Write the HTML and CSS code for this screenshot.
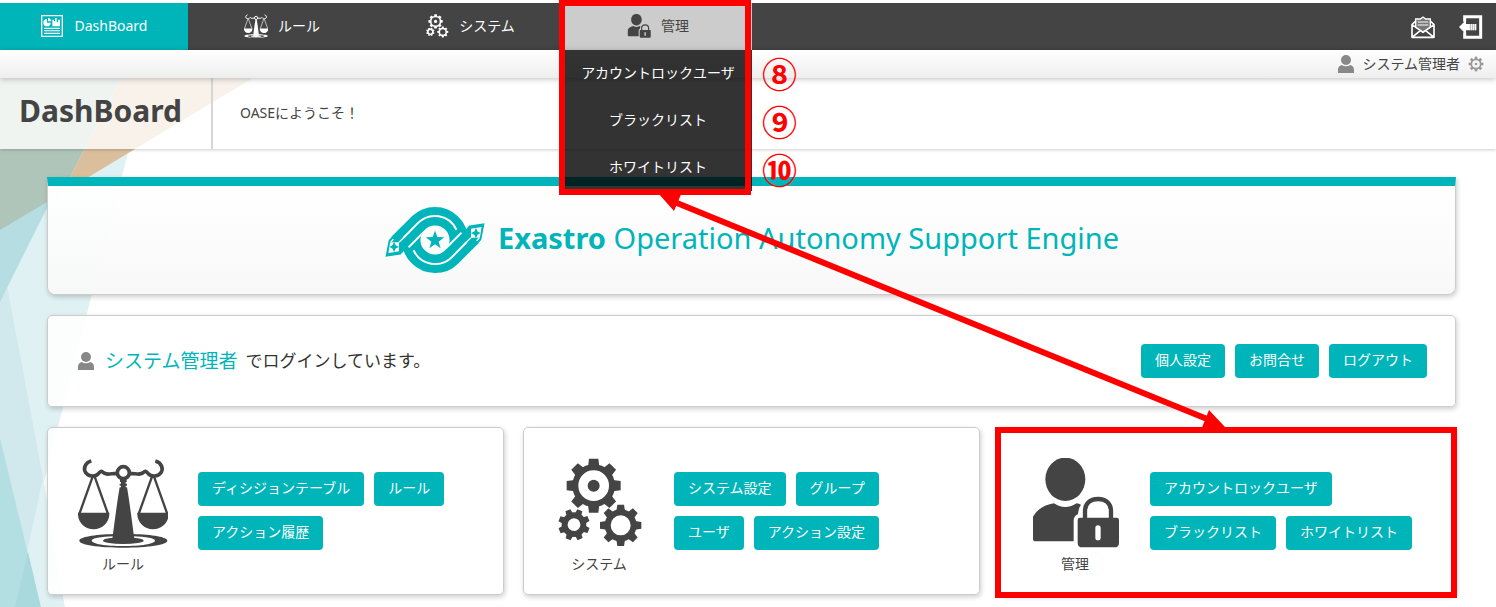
FILE: index.html
```html
<!DOCTYPE html>
<html lang="ja">
<head>
<meta charset="utf-8">
<meta name="viewport" content="width=device-width, initial-scale=1">
<title>DashBoard - Exastro OASE</title>
<link rel="stylesheet" href="styles.css">
</head>
<body>
<svg class="defs" width="0" height="0" aria-hidden="true">
  <symbol id="i-scales" viewBox="54 54 270 270">
    <g fill="none" stroke="currentColor">
      <circle cx="190" cy="98" r="18" stroke-width="11"/>
      <path stroke-width="11" d="M94 63c-20 5-25 25-16 36 8 11 28 12 37 2 6-7 10-9 14-4 8 9 20 4 43 3M286 63c20 5 25 25 16 36-8 11-28 12-37 2-6-7-10-9-14-4-8 9-20 4-43 3"/>
      <path stroke-width="7" d="M98 110 58 222M104 110l40 112M276 110l-40 112M282 110l40 112"/>
    </g>
    <path fill="currentColor" d="M54 218h94c2 28-20 50-47 50s-49-22-47-50zM232 218h94c2 28-20 50-47 50s-49-22-47-50zM180 120h20v6h-3v5h4v6h-4v5h4c8 46 16 110 22 156h-66c6-46 14-110 22-156h4v-5h-4v-6h4v-5h-3z"/>
    <ellipse cx="190" cy="302" rx="61" ry="10" fill="currentColor"/>
    <path fill="currentColor" fill-rule="evenodd" d="M162 282c-60 2-104 9-104 20 0 12 58 21 132 21s132-9 132-21c0-11-44-18-104-20l1 7c40 1 66 6 66 13 0 9-42 16-95 16s-95-7-95-16c0-7 26-12 66-13z"/>
  </symbol>
  <symbol id="i-gears" viewBox="42 54 270 270">
    <g transform="translate(161 137)">
      <circle r="55" fill="none" stroke="currentColor" stroke-width="18"/>
      <circle r="18" fill="currentColor"/>
      <g fill="currentColor">
        <path id="t1" d="M-14-81h28l3 24h-34z"/>
        <use href="#t1" transform="rotate(45)"/><use href="#t1" transform="rotate(90)"/><use href="#t1" transform="rotate(135)"/><use href="#t1" transform="rotate(180)"/><use href="#t1" transform="rotate(225)"/><use href="#t1" transform="rotate(270)"/><use href="#t1" transform="rotate(315)"/>
      </g>
    </g>
    <g transform="translate(242 256)">
      <circle r="39" fill="none" stroke="currentColor" stroke-width="18"/>
      <g fill="currentColor">
        <path id="t2" d="M-10-62h20l3 19h-26z"/>
        <use href="#t2" transform="rotate(45)"/><use href="#t2" transform="rotate(90)"/><use href="#t2" transform="rotate(135)"/><use href="#t2" transform="rotate(180)"/><use href="#t2" transform="rotate(225)"/><use href="#t2" transform="rotate(270)"/><use href="#t2" transform="rotate(315)"/>
      </g>
    </g>
    <g transform="translate(102 254) rotate(22)">
      <circle r="28" fill="none" stroke="currentColor" stroke-width="18"/>
      <g fill="currentColor">
        <path id="t3" d="M-8-47H8l2 15h-20z"/>
        <use href="#t3" transform="rotate(45)"/><use href="#t3" transform="rotate(90)"/><use href="#t3" transform="rotate(135)"/><use href="#t3" transform="rotate(180)"/><use href="#t3" transform="rotate(225)"/><use href="#t3" transform="rotate(270)"/><use href="#t3" transform="rotate(315)"/>
      </g>
    </g>
  </symbol>
  <symbol id="i-lock" viewBox="60 114 270 270">
    <ellipse cx="166" cy="178" rx="60" ry="65" fill="currentColor"/>
    <path fill="currentColor" d="M132 250c20 15 48 14 68 0 5 1 9 2 13 4-6 8-8 18-9 28-9 5-13 10-13 20v62H77q-8 0-8-8v-66c12-22 36-36 63-40z"/>
    <path fill="none" stroke="currentColor" stroke-width="13" d="M225 296v-22c0-22 14-37 39-37s39 15 39 37v22"/>
    <path fill="currentColor" fill-rule="evenodd" d="M210 293h110q7 0 7 7v68q0 14-14 14h-96q-14 0-14-14v-68q0-7 7-7zm54 23q-8 0-8 8v29q0 8 8 8t8-8v-29q0-8-8-8z"/>
  </symbol>
  <symbol id="i-person" viewBox="0 0 48 54">
    <circle cx="24" cy="15" r="15" fill="currentColor"/>
    <path fill="currentColor" d="M11 30c8 5 18 5 26 0 7 2 11 7 11 14v10H0V44c0-7 4-12 11-14z"/>
  </symbol>
</svg>

<svg class="backdrop" viewBox="0 0 260 530" aria-hidden="true">
  <path fill="#e0f1f3" d="M0 0h147L44 404l21 126H0z"/>
  <path fill="#d1e9ed" d="M0 170 43 400 15 530H0z"/>
  <path fill="#b5dde2" d="M0 100h62L0 224z"/>
  <path fill="#b3dee2" d="M0 360l41 170H0z"/>
  <path fill="#a9d8dd" d="M28 474l13 56H15z"/>
  <path fill="#b0c5ba" d="M0 0h121L62 115 0 152z"/>
  <path fill="#dbbf9c" d="M121 0h132L62 115z"/>
</svg>

<header class="topbar">
  <nav>
    <ul class="menu">
      <li class="menu-item"><a class="menu-link is-current" href="#">
        <svg class="menu-icon small" viewBox="0 0 66 66"><path fill="none" stroke="currentColor" stroke-width="4" d="M2 2h62v62H2z"/><path fill="currentColor" d="M18 12v11h11a11 11 0 1 1-11-11zM21 9a11 11 0 0 1 10 10H21zM34 14h5v5h3V9h5v12h4v-7h6v20H34zM9 38h48v4H9zM9 46h48v3H9zM9 53h48v4H9z"/></svg>
        <span>DashBoard</span></a></li>
      <li class="menu-item"><a class="menu-link" href="#"><svg class="menu-icon"><use href="#i-scales"/></svg><span>ルール</span></a></li>
      <li class="menu-item"><a class="menu-link" href="#"><svg class="menu-icon"><use href="#i-gears"/></svg><span>システム</span></a></li>
      <li class="menu-item"><a class="menu-link is-open" href="#"><svg class="menu-icon"><use href="#i-lock"/></svg><span>管理</span></a>
        <ul class="submenu">
          <li><a href="#">アカウントロックユーザ</a></li>
          <li><a href="#">ブラックリスト</a></li>
          <li><a href="#">ホワイトリスト</a></li>
        </ul>
        <div class="frame menu-frame"></div>
        <div class="marks"><span>⑧</span><span>⑨</span><span>⑩</span></div>
      </li>
    </ul>
  </nav>
  <div class="tools">
    <a href="#" aria-label="お問合せ"><svg class="tool-icon" viewBox="0 0 72 68"><path fill="none" stroke="currentColor" stroke-width="5" stroke-linejoin="round" d="M14 16 3 27v38h66V27L58 16M3 27l33 23 33-23M3 65l25-20M69 65 44 45"/><path fill="#777" stroke="currentColor" stroke-width="4" d="M14 34V10h14l8-6 8 6h14v24L36 49z"/><path stroke="currentColor" stroke-width="3" d="M20 19h32M20 28h32"/></svg></a>
    <a href="#" aria-label="ログアウト"><svg class="tool-icon" viewBox="0 0 72 72"><path fill="none" stroke="currentColor" stroke-width="9" d="M17 20V5h48v62H17V52"/><path fill="currentColor" d="M0 36l21-21v12h31v19H21v12z"/><path stroke="#888" stroke-width="2" d="M34 27v19M40 27v19M46 27v19"/></svg></a>
  </div>
</header>

<div class="userbar">
  <svg class="person"><use href="#i-person"/></svg>
  <span>システム管理者</span>
  <svg class="cog" viewBox="-24 -24 48 48"><circle r="14" fill="none" stroke="currentColor" stroke-width="5"/><circle r="4" fill="currentColor"/><g fill="currentColor"><path id="t4" d="M-4-22h8v8h-8z"/><use href="#t4" transform="rotate(45)"/><use href="#t4" transform="rotate(90)"/><use href="#t4" transform="rotate(135)"/><use href="#t4" transform="rotate(180)"/><use href="#t4" transform="rotate(225)"/><use href="#t4" transform="rotate(270)"/><use href="#t4" transform="rotate(315)"/></g></svg>
</div>

<div class="pagehead">
  <h1>DashBoard</h1>
  <p>OASEにようこそ！</p>
</div>

<main>
  <section class="panel hero">
    <svg class="logo" viewBox="10 14 308 212" role="img" aria-label="Exastro">
      <g fill="none" stroke="#00b5b9" stroke-width="56">
        <path d="M113 69A72 72 0 0 1 215 171"/><path d="M215 171A72 72 0 0 1 113 69"/>
      </g>
      <g id="arm">
        <path stroke="#fcfcfc" stroke-width="68" d="M108 74 62 120"/>
        <path stroke="#00b5b9" stroke-width="56" d="M115 67 51 131"/>
        <path fill="#00b5b9" d="M24 120l14-14 44 34-22 24-46 7z"/>
        <path fill="#fcfcfc" d="M28 127h27v27l-32 5z"/>
        <path fill="#00b5b9" d="M40 126l5 10 10 5-10 5-5 10-5-10-9-5 9-5z"/>
        <path fill="none" stroke="#fcfcfc" stroke-width="4" d="M55 127l14-14M30 126l8-8"/>
      </g>
      <use href="#arm" transform="rotate(180 164 120)"/>
      <g fill="none" stroke="#fcfcfc" stroke-width="6"><path d="M68 114l44-45A72 72 0 0 1 229 89"/><path d="M260 126l-44 45A72 72 0 0 1 99 151"/></g>
      <path fill="#00b5b9" d="M164 91l7 20 21 1-17 13 6 20-17-12-17 12 6-20-17-13 21-1z"/>
    </svg>
    <p class="hero-title"><strong>Exastro</strong> Operation Autonomy Support Engine</p>
  </section>

  <section class="panel login">
    <p class="login-text"><svg class="person"><use href="#i-person"/></svg><span class="login-name">システム管理者</span><span>でログインしています。</span></p>
    <div class="buttons"><button type="button">個人設定</button><button type="button">お問合せ</button><button type="button">ログアウト</button></div>
  </section>

  <div class="cards">
    <section class="panel card">
      <div class="card-head"><svg class="card-icon"><use href="#i-scales"/></svg><h2>ルール</h2></div>
      <div class="buttons"><button type="button">ディシジョンテーブル</button><button type="button">ルール</button><button type="button">アクション履歴</button></div>
    </section>
    <section class="panel card">
      <div class="card-head"><svg class="card-icon"><use href="#i-gears"/></svg><h2>システム</h2></div>
      <div class="buttons"><button type="button">システム設定</button><button type="button">グループ</button><button type="button">ユーザ</button><button type="button">アクション設定</button></div>
    </section>
    <section class="panel card">
      <div class="card-head"><svg class="card-icon"><use href="#i-lock"/></svg><h2>管理</h2></div>
      <div class="buttons"><button type="button">アカウントロックユーザ</button><button type="button">ブラックリスト</button><button type="button">ホワイトリスト</button></div>
      <div class="frame card-frame"></div>
    </section>
  </div>
</main>

<svg class="arrow" viewBox="0 0 580 250" aria-hidden="true">
  <path stroke="#f00" stroke-width="6" d="M20 14 560 234"/>
  <path fill="#f00" d="M6 6l24-1-8 19zM573 240l-24 3 8-20z"/>
</svg>
</body>
</html>
```

FILE: styles.css
```css
* { box-sizing: border-box; }

body {
  position: relative;
  margin: 0;
  padding-top: 3px;
  background: #fff;
  color: #444;
  font: 14px/20px "Noto Sans", "Noto Sans CJK JP", sans-serif;
}

h1, h2, p, ul { margin: 0; padding: 0; }
ul { list-style: none; }
a { color: inherit; text-decoration: none; }
svg { display: block; flex: none; }
.defs { position: absolute; }

.backdrop {
  position: absolute;
  z-index: -1;
  top: 78px;
  left: 0;
  width: 260px;
}

/* Top navigation */
.topbar {
  display: flex;
  justify-content: space-between;
  background: #444;
  color: #fff;
}
.menu { display: flex; }
.menu-item { position: relative; width: 188px; }
.menu-link {
  display: flex;
  align-items: center;
  justify-content: center;
  gap: 10px;
  height: 47px;
  padding-bottom: 2px;
}
.menu-link.is-current { gap: 12px; background: #00b5b9; }
.menu-link.is-open { background: #ccc; color: #444; }
.menu-icon { width: 24px; height: 24px; }
.menu-icon.small { width: 22px; height: 22px; }

.submenu {
  position: absolute;
  z-index: 2;
  top: 100%;
  left: 0;
  width: 100%;
  background: rgba(0, 0, 0, 0.8);
}
.submenu a { display: block; height: 47px; line-height: 45px; text-align: center; white-space: nowrap; }

.marks {
  position: absolute;
  z-index: 3;
  top: 46px;
  left: 198px;
  color: #f00;
  font: 700 35px/48px "Noto Sans CJK JP", sans-serif;
}
.marks span { display: block; }

.frame { position: absolute; z-index: 3; border: 6px solid #f00; pointer-events: none; }
.menu-frame { top: -3px; left: -5px; width: 192px; height: 195px; }
.card-frame { inset: -1px -2px -4px -5px; }

.tools { display: flex; align-items: center; gap: 24px; padding-right: 13px; }
.tool-icon { width: 24px; height: 24px; }

.userbar {
  position: relative;
  z-index: 1;
  display: flex;
  align-items: center;
  justify-content: flex-end;
  gap: 8px;
  height: 28px;
  padding-right: 12px;
  background: linear-gradient(#fff, #eee);
  box-shadow: 0 1px 6px rgba(0, 0, 0, 0.25);
}
.person { width: 16px; height: 18px; color: #888; }
.cog { width: 16px; height: 16px; color: #999; }

.pagehead {
  display: flex;
  height: 71px;
  background: rgba(255, 255, 255, 0.8);
  box-shadow: 0 1px 3px rgba(0, 0, 0, 0.2);
}
.pagehead h1 {
  width: 213px;
  padding-left: 19px;
  border-right: 2px solid #d6d6d6;
  font-size: 30px;
  line-height: 66px;
}
.pagehead p { padding-left: 27px; line-height: 70px; }

/* Panels */
main {
  display: grid;
  gap: 20px;
  padding: 28px 40px 12px 47px;
}
.panel {
  border: 1px solid #ccc;
  border-radius: 5px;
  background: rgba(255, 255, 255, 0.9);
  box-shadow: 1px 2px 5px rgba(0, 0, 0, 0.2);
}
.hero {
  display: flex;
  align-items: center;
  justify-content: center;
  gap: 12px;
  height: 118px;
  border-top: 9px solid #00b5b9;
  border-radius: 0 0 8px 8px;
  background: linear-gradient(rgba(255, 255, 255, 0.98), rgba(248, 248, 248, 0.98));
}
.logo { width: 102px; height: 70px; }
.hero-title { padding-bottom: 4px; color: #00b5b9; font-size: 29px; line-height: 40px; }

.login {
  display: flex;
  align-items: center;
  justify-content: space-between;
  padding: 28px 28px 28px 30px;
}
.login-text { display: flex; align-items: center; gap: 8px; color: #333; font-size: 17px; line-height: 34px; }
.login-name { padding-left: 3px; color: #00b5b9; font-size: 19px; }

.buttons { display: flex; flex-wrap: wrap; gap: 10px; }
button {
  height: 34px;
  padding: 0 14px 2px;
  border: 0;
  border-radius: 4px;
  background: #00b5b9;
  color: #fff;
  font: inherit;
}

.cards { display: grid; grid-template-columns: repeat(3, 1fr); gap: 19px; }
.card {
  position: relative;
  display: flex;
  align-items: center;
  gap: 30px;
  padding: 30px 28px 20px 30px;
}
.card-icon { width: 90px; height: 90px; }
.card h2 { padding-top: 6px; font-size: 14px; font-weight: 400; line-height: 20px; text-align: center; }
.card .buttons { margin-top: -10px; }

.arrow {
  position: absolute;
  z-index: 4;
  top: 187px;
  left: 652px;
  width: 580px;
  pointer-events: none;
}
```
